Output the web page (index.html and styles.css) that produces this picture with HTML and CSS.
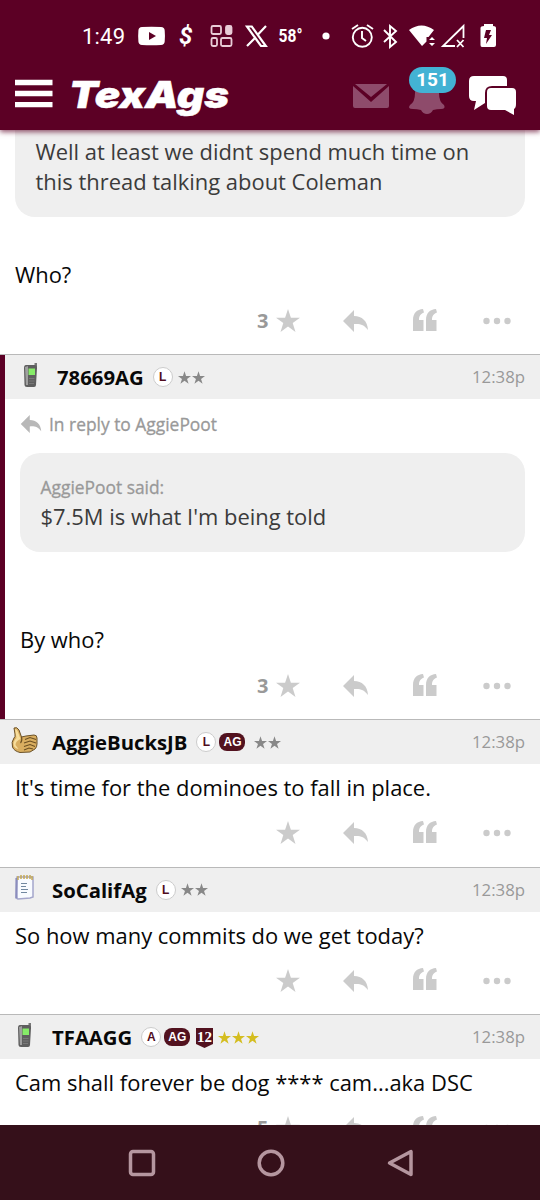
FILE: index.html
```
<!DOCTYPE html>
<html lang="en">
<head>
<meta charset="utf-8">
<title>TexAgs</title>
<link rel="stylesheet" href="styles.css">
</head>
<body>
<svg class="defs" aria-hidden="true">
  <symbol id="star" viewBox="0 0 24 23"><path d="M12 0l2.900 8.700H24l-7.300 5.400 2.800 8.800L12 17.500l-7.500 5.400 2.800-8.800L0 8.700h9.100z"/></symbol>
  <symbol id="reply" viewBox="0 0 25 22"><path d="M0 11L11 0v6c8 0 13.500 5 14 14-4-5.500-8-6.500-14-6v8z"/></symbol>
  <symbol id="quote" viewBox="0 0 24 22"><path d="M0 22V11C0 4 4 .5 10 0l1 3.500C7.500 5 6 7 6 11h4.500v11zM13 22V11C13 4 17 .5 23 0l1 3.500C20.500 5 19 7 19 11h4.500v11z"/></symbol>
  <symbol id="dots" viewBox="0 0 28 8"><circle cx="3.500" cy="4" r="3.200"/><circle cx="14" cy="4" r="3.200"/><circle cx="24.500" cy="4" r="3.200"/></symbol>
  <symbol id="phone" viewBox="0 0 17 25">
    <path d="M11.500 0H14v6h-2.500z" fill="#777"/><path d="M3 2h8.500q2.500 0 2.500 3l-1 17q0 2-2 2H4q-2.500 0-2.500-2L1 5q0-3 2-3z" fill="#5f5f5f"/><path d="M2 4l1 18h2L5 3z" fill="#a0a0a0"/><path d="M5.500 5.500H12v6.500H5.500z" fill="#86ec68"/><path d="M6 15.500h5.500M6 18h5.500M6 20.500h5" stroke="#858585" stroke-width=".7"/>
  </symbol>
  <symbol id="thumb" viewBox="0 0 27 26">
    <path d="M3 1q3-1.500 5 2l2.500 7 4.500-1 8-1q3 0 3 3v6q0 3-2 5l-5 3-10 .5Q3 24 1.500 20 0 15 3 11q1.500-1 1-4z" fill="#d9ae60" stroke="#6b5229"/>
    <path d="M4 2q2 0 3 3l2.500 7q-5 2-5 6l3 4Q2 21 2.500 16q.5-3 3-5z" fill="#f7de9c"/>
    <path d="M10.500 10q1 4-1 6M14 12.500l5-2 6 2M13 16l6-2 6 2M13 19.500l6-2 5 2M13 23l5-2 4 1" stroke="#6b4f22" fill="none" stroke-width="1.100"/>
  </symbol>
  <symbol id="note" viewBox="0 0 21 27">
    <path d="M3 3h16v20l-3 1-12 1-2-1z" fill="#f8fbff" stroke="#a4a6cb" stroke-width="1.500"/><path d="M2.500 4v20" stroke="#8b8dbd" stroke-width="2.200"/><path d="M4 2v4M7 1v4M10 1v4M13 1v4M16 1v4M18 2v4" stroke="#c6aa56" stroke-width="1.500"/><path d="M7 9.500h6M7 12.500h5M7 15.500h7M7 18.500h6" stroke="#7188a0" stroke-width="1.200"/>
  </symbol>
</svg>

<header class="top">
  <div class="status">
    <span class="clock">1:49</span>
    <svg class="status-icons" viewBox="130 20 400 32" width="400" height="32">
      <g fill="#fff">
        <path fill-rule="evenodd" d="M142 27q9.500-.6 19 0 3.500.3 3.700 3.500.5 5.500 0 11-.3 3.300-3.700 3.500-9.500.6-19 0-3.300-.3-3.600-3.500-.5-5.500 0-11 .2-3.200 3.600-3.500zM149 32v8l7-4z"/>
        <text class="dollar" x="179" y="44">$</text>
        <g fill="none" stroke="#e9ccd7" stroke-width="1.800"><rect x="211.500" y="26" width="9.500" height="8" rx="1.500"/><rect x="211.500" y="38" width="5.500" height="8" rx="1.500"/><rect x="221" y="38" width="10.500" height="8" rx="1.500"/><rect x="226" y="26" width="5.500" height="8" rx="1.500" fill="#e9ccd7"/></g>
        <path fill="none" stroke="#fff" stroke-width="2.200" d="M247 26.500h4.800l14 19.500H261zM266 26l-8.500 9M255.500 37.500L247 46"/>
        <text class="temp" x="278.500" y="42" textLength="24" lengthAdjust="spacingAndGlyphs">58°</text>
        <circle cx="326" cy="36" r="3.600"/>
        <g fill="none" stroke="#fff" stroke-width="1.900"><circle cx="362.300" cy="37.300" r="9.500"/><path d="M362 31v7l4 3M352 29l6-4M367 25l6 4M384 30l12 12-6 5V26l6 5-12 11"/></g>
        <path d="M409 30q12.500-9 25 0l-5.500 7h-2v4.500l-4.500 4.500z"/>
        <path d="M429 40l3-3 3 3zM429 43h6l-3 3z"/>
        <path fill="none" stroke="#fff" stroke-width="1.800" d="M455 46h-12l20.500-20v12M457 40l6.500 7M463.500 40l-6.500 7"/>
        <path fill-rule="evenodd" d="M484 24h9v2q3 0 3 2v17q0 2-2 2h-12q-1.500 0-1.500-2V28q0-2 3.500-2zM486 30l-2 8h3l-1 6 6-9h-3l2-5z"/>
      </g>
    </svg>
  </div>
  <div class="brandbar">
    <svg class="menu" viewBox="0 0 38 28" width="38" height="28"><path d="M0 2.500h37.500M0 13.500h37.500M0 24.700h37.500" stroke="#fff" stroke-width="5.300"/></svg>
    <svg class="wordmark" viewBox="0 0 160 44" width="160" height="44"><text x="-2" y="28" textLength="160" lengthAdjust="spacingAndGlyphs">TexAgs</text></svg>
    <div class="tools">
      <svg class="mail" viewBox="0 0 36 24" width="36" height="24"><path d="M0 2v20q0 2 2 2h32q2 0 2-2V2L18 18zM2 0h32L18 13z"/></svg>
      <div class="alerts"><svg class="bell" viewBox="0 0 36 38" width="36" height="38"><path d="M16 0h5v4q9 2 9 13 0 9 5 12 2 4-3 4-4 0-8 1-2 4-6 4t-6-4q-4-1-8-1-6 0-3-4 5-3 5-12Q6 6 16 4z"/></svg><span class="count">151</span></div>
      <svg class="chat" viewBox="0 0 48 40" width="48" height="40"><path d="M5 0h29q4 0 4 4v6H23q-7 0-7 7v10l-11 7 2-9H5q-5 0-5-5V5q0-5 5-5z"/><path d="M22 12h21q4 0 4 4v12q0 4-2 5v6l-9-5H22q-4 0-4-4V16q0-4 4-4z"/></svg>
    </div>
  </div>
</header>

<main class="thread">
  <article class="post first">
    <blockquote class="quoted open"><p>Well at least we didnt spend much time on<br>this thread talking about Coleman</p></blockquote>
    <p class="message late">Who?</p>
    <div class="actions"><b>3</b><svg class="a-star"><use href="#star"/></svg><svg class="a-reply"><use href="#reply"/></svg><svg class="a-quote"><use href="#quote"/></svg><svg class="a-dots"><use href="#dots"/></svg></div>
  </article>

  <article class="post marked">
    <div class="author"><svg class="avatar cell"><use href="#phone"/></svg><strong>78669AG</strong><span class="round">L</span><span class="rank"><svg><use href="#star"/></svg><svg><use href="#star"/></svg></span><time>12:38p</time></div>
    <div class="inreply"><svg><use href="#reply"/></svg><span>In reply to AggiePoot</span></div>
    <blockquote class="quoted"><cite>AggiePoot said:</cite><p>$7.5M is what I'm being told</p></blockquote>
    <p class="message who">By who?</p>
    <div class="actions"><b>3</b><svg class="a-star"><use href="#star"/></svg><svg class="a-reply"><use href="#reply"/></svg><svg class="a-quote"><use href="#quote"/></svg><svg class="a-dots"><use href="#dots"/></svg></div>
  </article>

  <article class="post short">
    <div class="author"><svg class="avatar hand"><use href="#thumb"/></svg><strong>AggieBucksJB</strong><span class="round">L</span><span class="pill">AG</span><span class="rank spaced"><svg><use href="#star"/></svg><svg><use href="#star"/></svg></span><time>12:38p</time></div>
    <p class="message">It's time for the dominoes to fall in place.</p>
    <div class="actions"><b></b><svg class="a-star"><use href="#star"/></svg><svg class="a-reply"><use href="#reply"/></svg><svg class="a-quote"><use href="#quote"/></svg><svg class="a-dots"><use href="#dots"/></svg></div>
  </article>

  <article class="post short">
    <div class="author"><svg class="avatar paper"><use href="#note"/></svg><strong>SoCalifAg</strong><span class="round">L</span><span class="rank"><svg><use href="#star"/></svg><svg><use href="#star"/></svg></span><time>12:38p</time></div>
    <p class="message">So how many commits do we get today?</p>
    <div class="actions"><b></b><svg class="a-star"><use href="#star"/></svg><svg class="a-reply"><use href="#reply"/></svg><svg class="a-quote"><use href="#quote"/></svg><svg class="a-dots"><use href="#dots"/></svg></div>
  </article>

  <article class="post short">
    <div class="author"><svg class="avatar cell lower"><use href="#phone"/></svg><strong>TFAAGG</strong><span class="round">A</span><span class="pill">AG</span><svg class="shield" viewBox="0 0 17 20"><path d="M0 0h17v16l-8.500 4L0 16z"/><text x="8.500" y="14">12</text></svg><span class="rank gold"><svg><use href="#star"/></svg><svg><use href="#star"/></svg><svg><use href="#star"/></svg></span><time>12:38p</time></div>
    <p class="message">Cam shall forever be dog **** cam...aka DSC</p>
    <div class="actions"><b>5</b><svg class="a-star"><use href="#star"/></svg><svg class="a-reply"><use href="#reply"/></svg><svg class="a-quote"><use href="#quote"/></svg><svg class="a-dots"><use href="#dots"/></svg></div>
  </article>
</main>

<nav class="system">
  <svg viewBox="0 0 28 28"><rect x="2.500" y="2.500" width="23" height="23" rx="2.500"/></svg>
  <svg viewBox="0 0 28 28"><circle cx="14" cy="14" r="11.800"/></svg>
  <svg viewBox="0 0 28 28"><path d="M25 2.500v23L3.500 14z" stroke-linejoin="round"/></svg>
</nav>
</body>
</html>
```

FILE: styles.css
```
* { box-sizing: border-box; }
body { margin: 0; width: 540px; height: 1200px; overflow: hidden; display: flex; flex-direction: column; background: #fff; color: #080808; font-family: "Open Sans", "Noto Sans", sans-serif; }
svg { display: block; flex: none; overflow: visible; }
p, blockquote { margin: 0; }
.defs { display: none; }
.top { height: 130px; flex: none; background: #5c0025; box-shadow: 0 2px 5px #5c0025aa; position: relative; }
.status { height: 70px; display: flex; padding: 20px 10px 0 82px; }
.clock { width: 48px; color: #fff; font: 400 22px/34px Roboto, sans-serif; letter-spacing: .2px; }
.dollar { font: italic bold 24px Roboto, sans-serif; }
.temp { font: bold 18px Roboto, sans-serif; }
.brandbar { height: 60px; display: flex; padding: 10px 24px 0 15px; }
.menu { margin-right: 18px; }
.wordmark text { font: italic 900 37px "Inter", sans-serif; fill: #fff; stroke: #fff; stroke-width: .5px; }
.tools { display: flex; margin-left: auto; }
.mail { fill: #8e4b6b; margin: 4px 20px 0 0; }
.alerts { position: relative; width: 36px; margin-right: 24px; }
.bell { fill: #8e4b6b; margin-top: -4px; }
.count { position: absolute; left: 0; top: -13px; width: 47px; height: 26px; border-radius: 13px; background: #43b2d4; color: #fff; font: bold 19px/25px Roboto, sans-serif; text-align: center; }
.chat { fill: #fff; margin: -4px -1px 0 0; }
.thread { height: 995px; overflow: hidden; flex: none; }
.first { height: 224px; display: flex; flex-direction: column; }
.quoted { background: #efefef; color: #3b3b3b; border-radius: 20px; font-size: 21.930px; line-height: 29.500px; white-space: nowrap; }
.quoted.open { height: 87px; margin: 0 15px; border-radius: 0 0 20px 20px; padding: 7px 20px 7px 20.500px; }
.message { font-size: 21.930px; line-height: 30px; white-space: nowrap; margin-left: 15px; }
.late { margin-top: 43px; }
.actions { height: 62px; display: flex; flex: none; align-items: center; padding-left: 257px; color: #999; fill: #cbcbcb; }
.actions b { width: 19px; font-size: 20px; line-height: 26px; }
.a-star { width: 24px; height: 23px; margin-top: -1px; }
.a-reply { width: 25px; height: 22px; margin-left: 43px; }
.a-quote { width: 24px; height: 22px; margin-left: 45px; margin-top: -3px; }
.a-dots { width: 28px; height: 8px; margin-left: 46px; }
.post:not(.first) { border-top: 1px solid #b9b9b9; }
.author { height: 44px; display: flex; align-items: center; background: #efefef; padding: 0 15px 0 52px; position: relative; }
.author strong { font-size: 20.300px; margin-right: 9px; white-space: nowrap; }
.avatar { position: absolute; left: 18px; top: 8px; }
.cell { width: 17px; height: 25px; }
.lower { left: 17px; }
.hand { left: 11px; top: 7px; width: 27px; height: 26px; }
.paper { left: 14px; top: 6px; width: 21px; height: 27px; }
.round { width: 20px; height: 20px; border-radius: 50%; background: #fff; border: 1px solid #ccc; font: bold 12px/18px "Liberation Sans", sans-serif; text-align: center; color: #500d1e; }
.pill { width: 26px; height: 18px; margin-left: 3px; border-radius: 8px; background: #52121f; color: #fff; font: bold 12px/18px "Liberation Sans", sans-serif; text-align: center; }
.rank { display: flex; gap: 1px; margin-left: 5px; fill: #888; }
.rank svg { width: 13px; height: 13px; }
.rank.spaced { margin-left: 9px; }
.gold { fill: #d4bd20; margin-left: 5px; }
.shield { width: 17px; height: 20px; margin: 2px 0 0 6px; fill: #52121f; }
.shield text { fill: #fff; font: bold 15px "Liberation Serif", serif; text-anchor: middle; }
time { margin: -1px 0 0 auto; color: #999; font-size: 16.800px; }
.marked { height: 365px; position: relative; padding-left: 5px; background: linear-gradient(#5c0025, #5c0025) left / 5px 100% no-repeat; }
.inreply { height: 54px; display: flex; align-items: center; gap: 7px; padding: 0 0 5px 15px; color: #999; fill: #b8b8b8; font-size: 17.400px; -webkit-text-stroke: .3px #999; }
.inreply svg { width: 22px; height: 18px; }
.marked .quoted { height: 99px; margin: 0 15px; padding: 20px 20px 0 20.500px; }
cite { display: block; font-style: normal; font-size: 17.400px; line-height: 29px; color: #999; -webkit-text-stroke: .3px #999; }
.who { margin: 73px 0 0 15px; }
.marked .actions { padding-left: 252px; height: 62px; }
.short { height: 147.500px; }
.short .message { margin-top: 9px; }
.short .actions { height: 60px; }
.system { height: 75px; flex: none; background: #35101a; display: flex; gap: 101px; align-items: center; padding-left: 128px; position: relative; }
.system svg { width: 28px; height: 28px; fill: none; stroke: #b5969f; stroke-width: 3.500px; }
```
